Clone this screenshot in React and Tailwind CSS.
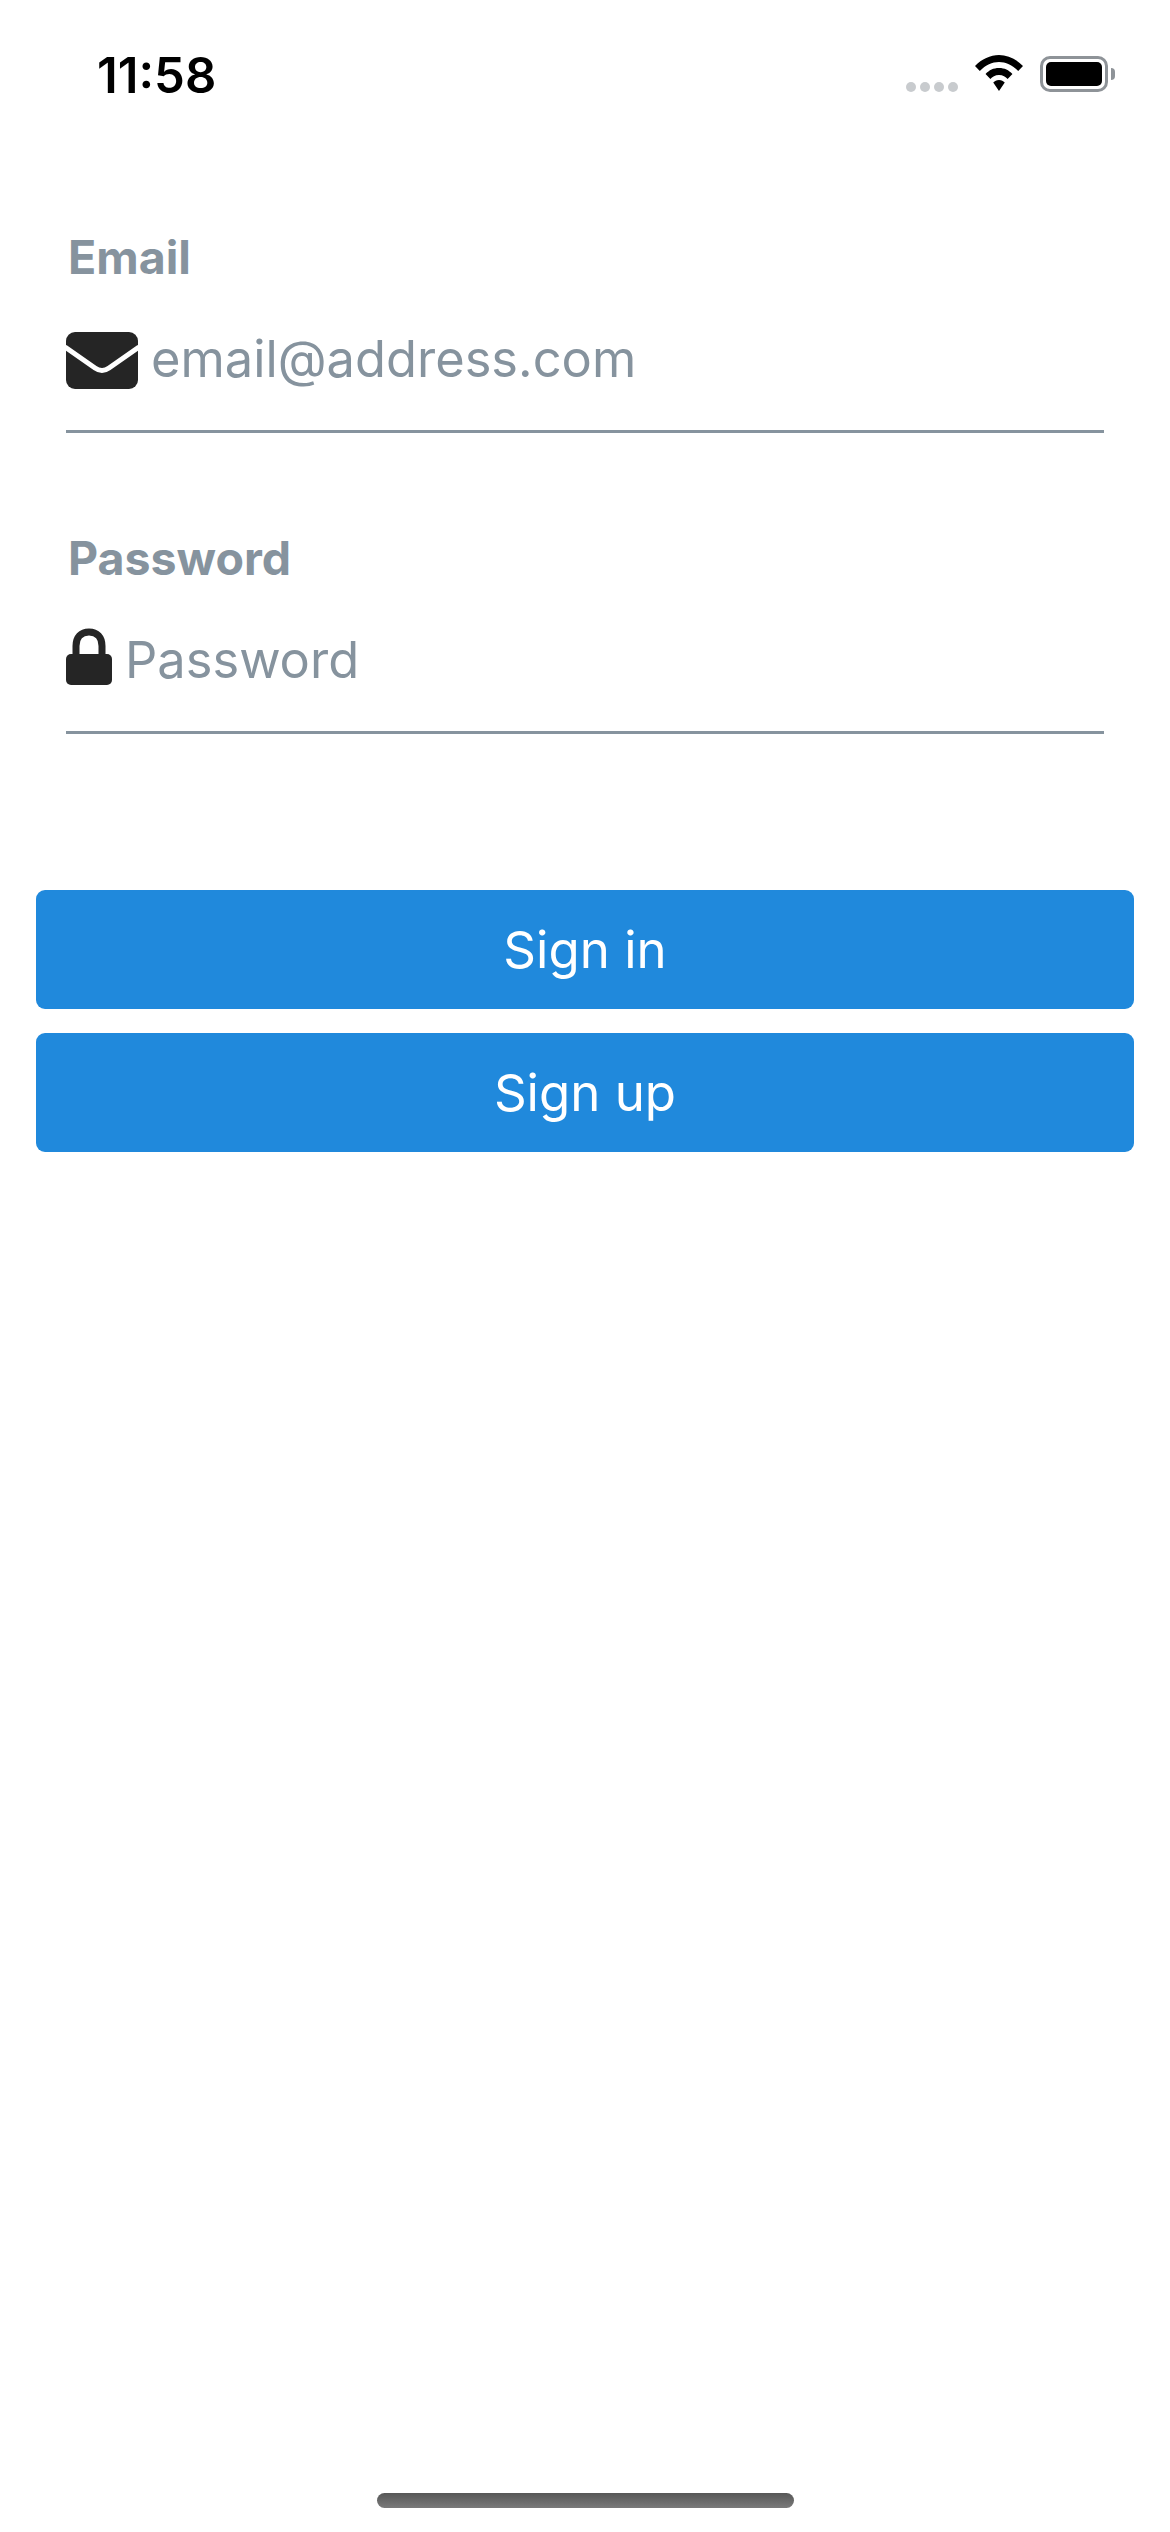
import React from 'react';

const MailIcon = () => (
  <svg width="72" height="57" viewBox="0 0 72 57" className="shrink-0">
    <rect width="72" height="57" rx="9" fill="#252525" />
    <path d="M-1 15 L29 36 Q36 41 43 36 L73 15" fill="none" stroke="#fff" strokeWidth="5" />
  </svg>
);

const LockIcon = () => (
  <svg width="46" height="57" viewBox="0 0 46 57" className="shrink-0 -translate-y-[5px]">
    <path d="M10 28 V18 C10 9 15 4 23 4 C31 4 36 9 36 18 V28" fill="none" stroke="#252525" strokeWidth="7" />
    <rect y="26" width="46" height="31" rx="5" fill="#252525" />
  </svg>
);

const WifiIcon = () => (
  <svg width="48" height="36" viewBox="0 0 50 36" preserveAspectRatio="none">
    <path d="M25 0 C34 0 43 4 50 11 L45 16 C39 10 32 7 25 7 C18 7 11 10 5 16 L0 11 C7 4 16 0 25 0 Z" fill="#000" />
    <path d="M25 13 C31 13 35 15 39 19 L34 24 C32 22 29 20 25 20 C21 20 18 22 16 24 L11 19 C15 15 19 13 25 13 Z" fill="#000" />
    <path d="M25 25 C28 25 29 26 31 27.500 L25 36 L19 27.500 C21 26 22 25 25 25 Z" fill="#000" />
  </svg>
);

const BatteryIcon = () => (
  <div className="flex items-center">
    <div className="w-[68px] h-[36px] rounded-[10px] border-[3px] border-[#8e9398] p-[3px]">
      <div className="w-full h-full rounded-[5px] bg-black" />
    </div>
    <div className="w-[4px] h-[12px] ml-[3px] rounded-r-full bg-[#8e9398]" />
  </div>
);

const Field = ({ label, icon, placeholder }) => (
  <div className="flex flex-col">
    <div className="h-[56px] text-[46.500px] leading-[56px] font-bold text-[#86939e] pl-[2px]">{label}</div>
    <div className="flex items-center gap-[13px] h-[57px] mt-[47px]">
      {icon}
      <span className="text-[50.600px] leading-[57px] pb-[5px] text-[#86939e]">{placeholder}</span>
    </div>
    <div className="h-[3px] mt-[41px] bg-[#86939e]" />
  </div>
);

const App = () => {
  return (
    <div className="w-[1170px] h-[2532px] bg-white flex flex-col font-['Inter','Liberation_Sans',sans-serif]">
      {/* Status bar */}
      <div className="flex items-start justify-between h-[229px] pl-[97px] pr-[55px] pt-[50px]">
        <span className="text-[49px] leading-[48px] mt-[2px] font-semibold text-black">11:58</span>
        <div className="flex items-start pt-[5px]">
          <div className="flex gap-[4px] mt-[27px]">
            {[0, 1, 2, 3].map((i) => (
              <div key={i} className="w-[10px] h-[10px] rounded-full bg-[#c8cbce]" />
            ))}
          </div>
          <div className="ml-[17px]">
            <WifiIcon />
          </div>
          <div className="ml-[17px] mt-[1px]">
            <BatteryIcon />
          </div>
        </div>
      </div>

      {/* Form */}
      <div className="flex flex-col gap-[97px] px-[66px]">
        <Field label="Email" icon={<MailIcon />} placeholder="email@address.com" />
        <Field label="Password" icon={<LockIcon />} placeholder="Password" />
      </div>

      {/* Buttons */}
      <div className="flex flex-col gap-[24px] px-[36px] mt-[156px]">
        <button className="h-[119px] pt-[2px] rounded-[9px] bg-[#2089dc] text-white text-[51px]">Sign in</button>
        <button className="h-[119px] pt-[2px] rounded-[9px] bg-[#2089dc] text-white text-[51px]">Sign up</button>
      </div>

      {/* Home indicator */}
      <div className="mt-auto mb-[24px] mx-auto w-[417px] h-[15px] rounded-full bg-gradient-to-b from-[#575757] to-[#7a7a7a]" />
    </div>
  );
};

export default App;
